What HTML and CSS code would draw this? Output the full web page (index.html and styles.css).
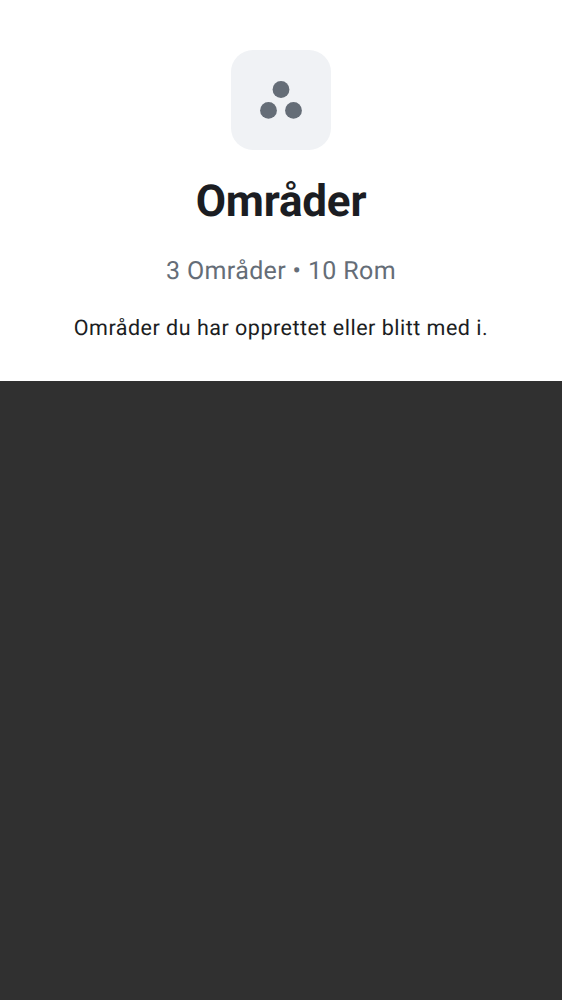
FILE: index.html
```html
<!DOCTYPE html>
<html lang="nb">
<head>
<meta charset="utf-8">
<title>Områder</title>
<link rel="stylesheet" href="styles.css">
</head>
<body>
<header class="hero">
<div class="hero-icon">
<svg class="spaces-glyph" viewBox="0 0 100 100" aria-hidden="true">
<circle cx="50" cy="39.5" r="8.4"/>
<circle cx="37.5" cy="60.4" r="8.4"/>
<circle cx="62.5" cy="60.4" r="8.4"/>
</svg>
</div>
<h1 class="title">Områder</h1>
<p class="counts">3 Områder • 10 Rom</p>
<p class="description">Områder du har opprettet eller blitt med i.</p>
</header>
</body>
</html>
```

FILE: styles.css
```css
body {
  margin: 0;
  background: #303030;
  font-family: Roboto, sans-serif;
  text-rendering: geometricPrecision;
}

.hero {
  box-sizing: border-box;
  height: 381px;
  padding-top: 50px;
  display: flex;
  flex-direction: column;
  align-items: center;
  background: #fff;
  color: #1b1d22;
  white-space: nowrap;
}

.hero-icon {
  width: 100px;
  height: 100px;
  border-radius: 22px;
  background: #f0f2f5;
}

.spaces-glyph {
  display: block;
  fill: #656d77;
}

.title {
  margin: 24px 0 0;
  font-size: 44px;
  line-height: 54px;
  font-weight: 700;
  letter-spacing: -0.2px;
}

.counts {
  margin: 26px 0 0;
  color: #656d77;
  font-size: 25px;
  line-height: 36px;
  letter-spacing: 0.35px;
}

.description {
  margin: 23px 0 0;
  font-size: 21.5px;
  line-height: 32px;
  letter-spacing: 0.5px;
}
```
